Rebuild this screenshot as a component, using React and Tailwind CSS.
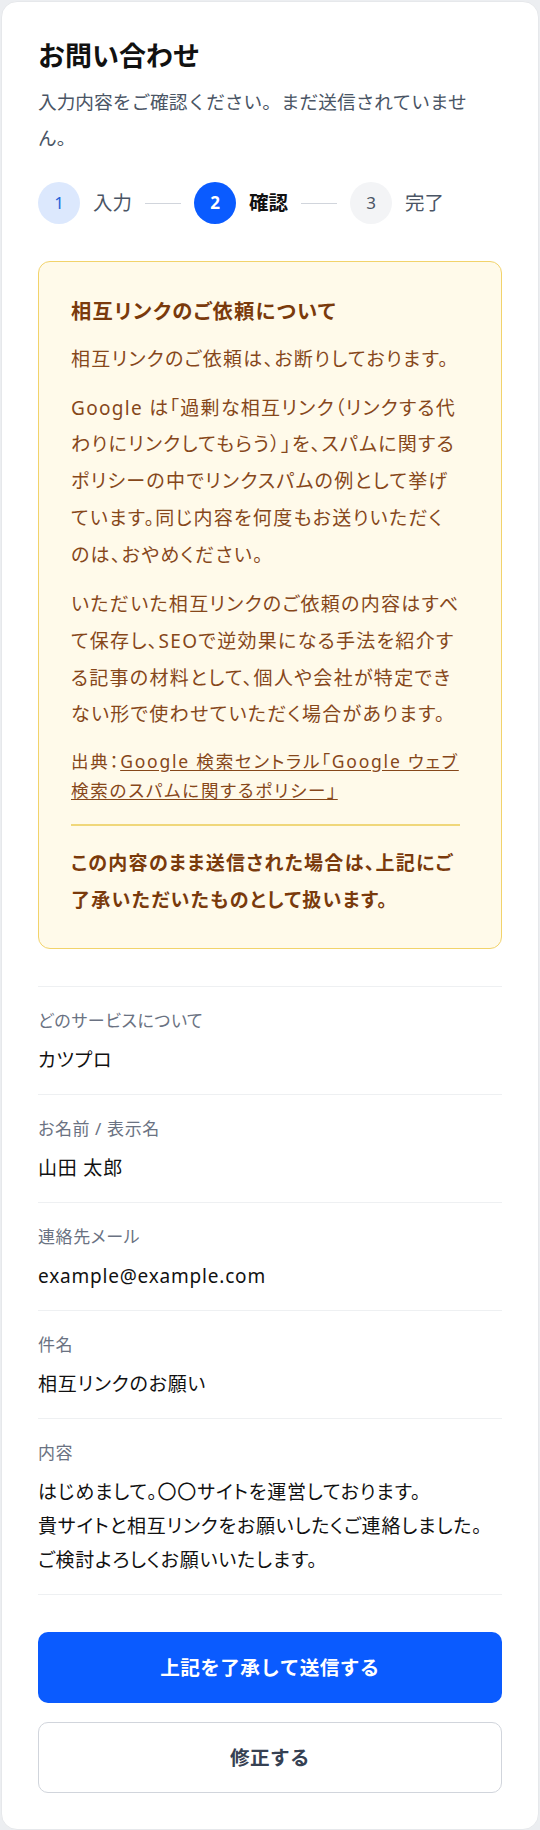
import React from 'react';

const fields = [
  { label: 'どのサービスについて', value: 'カツプロ' },
  { label: 'お名前 / 表示名', value: '山田 太郎' },
  { label: '連絡先メール', value: 'example@example.com' },
  { label: '件名', value: '相互リンクのお願い' },
  {
    label: '内容',
    value: 'はじめまして。〇〇サイトを運営しております。\n貴サイトと相互リンクをお願いしたくご連絡しました。\nご検討よろしくお願いいたします。',
  },
];

const StepLine = () => <div className="h-px w-9 bg-gray-300" />;

const App = () => {
  return (
    <div className="min-h-screen bg-[#eceef1] p-px font-['Noto_Sans','Noto_Sans_CJK_JP',sans-serif]">
      <div className="rounded-2xl border border-[#e6e8eb] bg-white px-9 pt-9 pb-9">
        <h1 className="text-[27px] font-bold leading-[36px] text-[#111]">お問い合わせ</h1>
        <p className="mt-[10px] text-[18.7px] leading-[36px] text-gray-600">
          入力内容をご確認ください。まだ送信されていません。
        </p>

        {/* steps */}
        <div className="mt-[26px] flex items-center gap-[13px]">
          <div className="flex h-[42px] w-[42px] items-center justify-center rounded-full bg-[#dce8fd] text-[17px] text-[#2563d9]">1</div>
          <span className="text-[19.5px] text-gray-600">入力</span>
          <StepLine />
          <div className="flex h-[42px] w-[42px] items-center justify-center rounded-full bg-[#0a5bff] text-[17px] font-bold text-white">2</div>
          <span className="text-[19.5px] font-bold text-[#111]">確認</span>
          <StepLine />
          <div className="flex h-[42px] w-[42px] items-center justify-center rounded-full bg-[#f3f4f6] text-[17px] text-gray-600">3</div>
          <span className="text-[19.5px] text-gray-600">完了</span>
        </div>

        {/* notice */}
        <div className="mt-[37px] rounded-xl border-[1.5px] border-[#f2d36b] bg-[#fffaea] pt-[34px] pr-[41px] pb-[30px] pl-8 tracking-[1.3px] text-[#86471a] [font-feature-settings:'palt']">
          <h2 className="text-[20.3px] font-bold leading-[30px] text-[#7a3a0c]">相互リンクのご依頼について</h2>
          <p className="mt-[15px] text-[19px] leading-[36.7px]">相互リンクのご依頼は、お断りしております。</p>
          <p className="mt-[12px] text-[19px] leading-[36.7px]">
            Google は「過剰な相互リンク（リンクする代わりにリンクしてもらう）」を、スパムに関するポリシーの中でリンクスパムの例として挙げています。同じ内容を何度もお送りいただくのは、おやめください。
          </p>
          <p className="mt-[13px] text-[19px] leading-[36.7px]">
            いただいた相互リンクのご依頼の内容はすべて保存し、SEOで逆効果になる手法を紹介する記事の材料として、個人や会社が特定できない形で使わせていただく場合があります。
          </p>
          <p className="mt-[14px] text-[17.5px] leading-[29px] tracking-[1.8px]">
            出典：<a href="#" className="underline underline-offset-2">Google 検索セントラル「Google ウェブ検索のスパムに関するポリシー」</a>
          </p>
          <div className="mt-[19px] h-[2px] bg-[#f0d77a]" />
          <p className="mt-[19px] text-[19px] font-bold leading-[36.7px] text-[#7a3a0c]">
            この内容のまま送信された場合は、上記にご了承いただいたものとして扱います。
          </p>
        </div>

        {/* fields */}
        <dl className="mt-[37px] border-b border-[#eef0f2]">
          {fields.map((f) => (
            <div key={f.label} className="border-t border-[#eef0f2] pt-[22px] pb-[17.5px]">
              <dt className="text-[17px] leading-[24px] tracking-[0.6px] text-gray-500 [font-feature-settings:'palt']">{f.label}</dt>
              <dd className="mt-[9.5px] whitespace-pre-line text-[19px] leading-[34px] tracking-[0.8px] text-[#111] [font-feature-settings:'palt']">
                {f.value}
              </dd>
            </div>
          ))}
        </dl>

        {/* actions */}
        <div className="mt-[37px] flex flex-col gap-[19px]">
          <button className="h-[71px] rounded-[10px] bg-[#0a5bff] text-[19.6px] font-bold tracking-[0.4px] text-white">
            上記を了承して送信する
          </button>
          <button className="h-[71px] rounded-[10px] border border-gray-300 bg-white text-[19.6px] font-bold tracking-[0.4px] text-gray-700">
            修正する
          </button>
        </div>
      </div>
    </div>
  );
};

export default App;
